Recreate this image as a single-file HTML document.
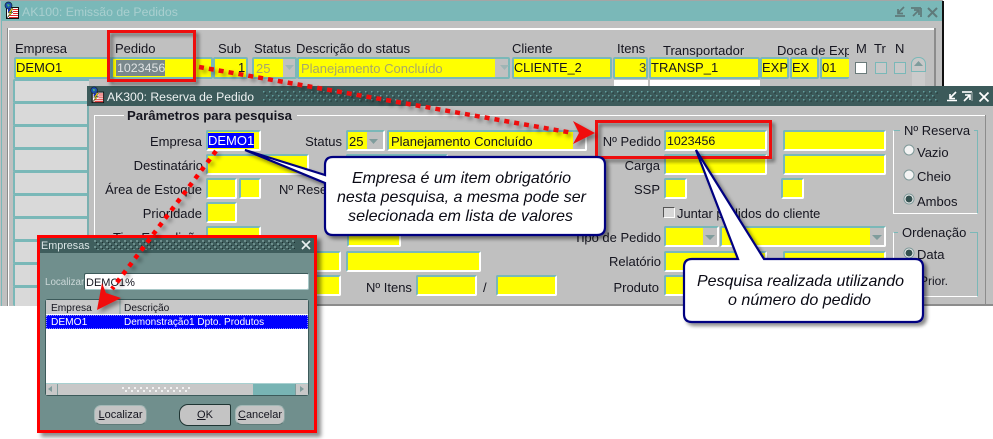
<!DOCTYPE html>
<html><head><meta charset="utf-8">
<style>
html,body{margin:0;padding:0;background:#fff}
#p{position:relative;width:993px;height:439px;overflow:hidden;background:#fff;font-family:"Liberation Sans",sans-serif;font-size:13px;color:#15151f}
#p div{position:absolute;box-sizing:border-box}
.t{white-space:nowrap;line-height:14px;height:14px;margin-top:1px}
.f{background:#ff0;border:2px solid;border-color:#7ab8b8 #fff #fff #7ab8b8;border-radius:2px}
.g{background:#ff0;border:2px solid #7ab8b8;border-radius:2px}
.r{background:#d9d9d9;border:2px solid #7ab8b8;border-right:0;border-radius:2px 0 0 2px}
.d{background:#c0c0c0}
.b{background:#c4c4c4;border-radius:7px;border:1px solid #8ba5a3;border-color:#a3b8b6 #8ba5a3 #5f7a78 #a3b8b6;text-align:center;font-size:11px;line-height:18px}
.s{font-size:10.2px}
svg{position:absolute;left:0;top:0}
</style></head><body>
<div id="p">
<!-- window 1 -->
<div style="left:0;top:0;width:943px;height:86px;background:#c0c0c0;border-top:1px solid #a5a5a5"></div>
<div style="left:0;top:86px;width:88px;height:220px;background:#c0c0c0"></div>
<div style="left:942px;top:1px;width:2px;height:86px;background:#111"></div>
<div style="left:1px;top:1px;width:941px;height:20px;background:#7ab8b8"></div>
<div style="left:1px;top:21px;width:1px;height:285px;background:#7ab8b8"></div>
<div style="left:7px;top:28px;width:929px;height:2px;background:#fff"></div>
<div style="left:7px;top:28px;width:2px;height:278px;background:#fff;border-left:1px solid #8c8c8c"></div>
<div style="left:934px;top:28px;width:2px;height:60px;background:#8c8c8c"></div>
<div class="t" style="left:22px;top:4px;color:#a9cfcf;font-size:12.3px">AK100: Emissão de Pedidos</div>

<div class="t" style="left:15px;top:41px">Empresa</div>
<div class="t" style="left:115px;top:41px">Pedido</div>
<div class="t" style="left:218px;top:41px">Sub</div>
<div class="t" style="left:254px;top:41px">Status</div>
<div class="t" style="left:296px;top:41px">Descrição do status</div>
<div class="t" style="left:512px;top:41px">Cliente</div>
<div class="t" style="left:617px;top:41px">Itens</div>
<div class="t" style="left:663px;top:43px">Transportador</div>
<div class="t" style="left:777px;top:43px;width:72px;overflow:hidden">Doca de Exped</div>
<div class="t" style="left:856px;top:41px">M</div>
<div class="t" style="left:874px;top:41px">Tr</div>
<div class="t" style="left:895px;top:41px">N</div>

<div class="g" style="left:14px;top:57px;width:98px;height:22px"></div>
<div class="g" style="left:111px;top:57px;width:102px;height:22px"></div>
<div class="g" style="left:213px;top:57px;width:35px;height:22px"></div>
<div class="g" style="left:252px;top:57px;width:45px;height:22px"></div>
<div class="d" style="left:283px;top:59px;width:12px;height:18px"></div>
<div class="g" style="left:297px;top:57px;width:213px;height:22px"></div>
<div class="d" style="left:495px;top:59px;width:13px;height:18px"></div>
<div class="g" style="left:512px;top:57px;width:100px;height:22px"></div>
<div class="g" style="left:613px;top:57px;width:35px;height:22px"></div>
<div class="g" style="left:649px;top:57px;width:111px;height:22px"></div>
<div class="g" style="left:760px;top:57px;width:29px;height:22px"></div>
<div class="g" style="left:790px;top:57px;width:29px;height:22px"></div>
<div class="g" style="left:820px;top:57px;width:29px;height:22px;border-right:0"></div>
<div style="left:116px;top:60px;width:49px;height:16px;background:#79888c"></div>
<div class="t" style="left:16px;top:60px">DEMO1</div>
<div class="t" style="left:117px;top:60px;color:#dfe3e3;font-size:12.4px">1023456</div>
<div class="t" style="left:238px;top:60px">1</div>
<div class="t" style="left:256px;top:61px;color:#a8a868">25</div>
<div class="t" style="left:301px;top:61px;color:#a8a868">Planejamento Concluído</div>
<div class="t" style="left:514px;top:60px;font-size:12.7px">CLIENTE_2</div>
<div class="t" style="left:639px;top:60px;color:#444">3</div>
<div class="t" style="left:651px;top:60px">TRANSP_1</div>
<div class="t" style="left:762px;top:60px">EXP</div>
<div class="t" style="left:792px;top:60px">EX</div>
<div class="t" style="left:822px;top:60px">01</div>

<div style="left:855px;top:62px;width:12px;height:12px;background:#fff;border:1px solid #6a7a7a"></div>
<div style="left:875px;top:62px;width:12px;height:12px;background:#c8c8c8;border:1px solid #7ab8b8"></div>
<div style="left:894px;top:62px;width:12px;height:12px;background:#c8c8c8;border:1px solid #7ab8b8"></div>
<div style="left:912px;top:70px;width:13px;height:17px;background:#cbcbcb"></div>
<div style="left:911px;top:57px;width:15px;height:15px;background:#c8c8c8;border:1px solid #7ab8b8;border-radius:7px 7px 0 0"></div>
<div style="left:614px;top:80px;width:34px;height:7px;background:#fff"></div>
<div style="left:650px;top:80px;width:110px;height:7px;background:#fff"></div>

<div class="r" style="left:13px;top:79px;width:76px;height:24px"></div>
<div class="r" style="left:13px;top:102px;width:76px;height:24px"></div>
<div class="r" style="left:13px;top:125px;width:76px;height:24px"></div>
<div class="r" style="left:13px;top:148px;width:76px;height:24px"></div>
<div class="r" style="left:13px;top:171px;width:76px;height:24px"></div>
<div class="r" style="left:13px;top:194px;width:76px;height:24px"></div>
<div class="r" style="left:13px;top:217px;width:76px;height:24px"></div>
<div class="r" style="left:13px;top:240px;width:76px;height:24px"></div>
<div class="r" style="left:13px;top:263px;width:76px;height:24px"></div>
<div class="r" style="left:13px;top:286px;width:76px;height:20px;border-bottom:0"></div>

<svg width="993" height="110">
<defs>
<pattern id="dots" width="6" height="8" patternUnits="userSpaceOnUse">
<rect x="0" y="0" width="1.500" height="1.500" fill="#63a0a0"/><rect x="1.500" y="1.500" width="1" height="1" fill="#0c1a1a"/>
<rect x="3" y="4" width="1.500" height="1.500" fill="#63a0a0"/><rect x="4.500" y="5.500" width="1" height="1" fill="#0c1a1a"/>
</pattern>
<pattern id="dots2" width="6" height="6" patternUnits="userSpaceOnUse">
<rect x="0" y="0" width="2" height="2" fill="#6d8f8d"/><rect x="3" y="3" width="2" height="2" fill="#6d8f8d"/>
<rect x="2" y="2" width="1" height="1" fill="#1d3030"/><rect x="5" y="5" width="1" height="1" fill="#1d3030"/>
</pattern>
</defs>
<path d="M285 65h9l-4.500 5zM500 65h9l-4.500 5z" fill="#9fb5b5"/>
<path d="M914 66h9l-4.500-5z" fill="#7f9c9c"/>
<g stroke="#5f7a7a" fill="none" stroke-width="1.700">
<path d="M895 16h10M904 7l-6 6M898 9v4.500h5"/>
<path d="M911 8h10M921 8v9" /><path d="M913 16l6-6M914 10h5v5"/>
<path d="M928 8l9 9M937 8l-9 9" stroke-width="2"/>
</g>
<g>
<rect x="6.500" y="7.500" width="12" height="11" fill="#fff" stroke="#111"/>
<path d="M6 8h1v11H6z" fill="#111"/>
<path d="M8 9h4v3H8z" fill="#2030d8"/>
<path d="M13 9h5v1h-5zM13 11h5v1h-5zM13 13h5v1h-5zM9 15h9v1H9zM9 17h9v1H9z" fill="#e02828"/>
<path d="M12 8l-4 5 2.500-.5L7 18l6-6-2.500.5L13 9z" fill="#ffe800" stroke="#222" stroke-width=".5"/>
<circle cx="8.500" cy="5.500" r="3.500" fill="#1c4fb0" stroke="#123" stroke-width=".7"/>
<path d="M7 4l3 1-2 2z" fill="#4cc070"/>
</g>
</svg>

<!-- window 2 -->
<div style="left:87px;top:86px;width:906px;height:220px;background:#c0c0c0;border-left:2px solid #7ab0b0;border-bottom:2px solid #8c8c8c"></div>
<div style="left:87px;top:86px;width:906px;height:20px;background:#3c5a5a"></div>
<svg style="left:263px;top:91px" width="675" height="11"><rect width="675" height="11" fill="url(#dots)"/></svg>
<div class="t" style="left:107px;top:89px;color:#eef2f2;font-size:12.2px">AK300: Reserva de Pedido</div>
<div style="left:94px;top:115px;width:30px;height:1px;background:#fff"></div>
<div style="left:297px;top:115px;width:688px;height:1px;background:#fff"></div>
<div style="left:94px;top:115px;width:1px;height:191px;background:#fff"></div>
<div style="left:985px;top:115px;width:1px;height:190px;background:#8c8c8c"></div>
<div class="t" style="left:127px;top:108px;font-weight:bold;font-size:13.2px">Parâmetros para pesquisa</div>

<div class="f" style="left:206px;top:130px;width:55px;height:21px"></div>
<div style="left:208px;top:133px;width:46px;height:15px;background:#00f"></div>
<div class="t" style="left:208px;top:133px;color:#fff">DEMO1</div>
<div class="t" style="right:791px;top:134px">Empresa</div>
<div class="t" style="right:651px;top:134px">Status</div>
<div class="f" style="left:346px;top:130px;width:39px;height:21px"></div>
<div class="d" style="left:367px;top:132px;width:16px;height:17px"></div>
<div class="t" style="left:349px;top:134px">25</div>
<div class="f" style="left:387px;top:130px;width:200px;height:21px"></div>
<div class="d" style="left:573px;top:132px;width:12px;height:17px"></div>
<div class="t" style="left:391px;top:134px">Planejamento Concluído</div>

<div class="t" style="right:790px;top:158px">Destinatário</div>
<div class="f" style="left:206px;top:154px;width:103px;height:21px"></div>
<div class="f" style="left:346px;top:154px;width:102px;height:21px"></div>
<div class="t" style="right:791px;top:182px">Área de Estoque</div>
<div class="f" style="left:206px;top:178px;width:31px;height:21px"></div>
<div class="f" style="left:239px;top:178px;width:22px;height:21px"></div>
<div class="t" style="left:279px;top:182px">Nº Reserva</div>
<div class="t" style="right:791px;top:206px">Prioridade</div>
<div class="f" style="left:206px;top:202px;width:31px;height:21px"></div>
<div class="t" style="left:113px;top:230px">Tipo Expedição</div>
<div class="f" style="left:206px;top:226px;width:55px;height:21px"></div>
<div class="f" style="left:347px;top:226px;width:54px;height:21px"></div>
<div class="f" style="left:300px;top:251px;width:41px;height:21px"></div>
<div class="f" style="left:346px;top:251px;width:135px;height:21px"></div>
<div class="f" style="left:300px;top:275px;width:41px;height:21px"></div>
<div class="t" style="left:366px;top:280px">Nº Itens</div>
<div class="f" style="left:416px;top:275px;width:61px;height:21px"></div>
<div class="t" style="left:483px;top:280px">/</div>
<div class="f" style="left:496px;top:275px;width:61px;height:21px"></div>

<div class="t" style="right:332px;top:134px">Nº Pedido</div>
<div class="f" style="left:664px;top:130px;width:103px;height:21px"></div>
<div class="t" style="left:667px;top:133px;font-size:12.4px">1023456</div>
<div class="f" style="left:783px;top:130px;width:103px;height:21px"></div>
<div class="t" style="right:333px;top:158px">Carga</div>
<div class="f" style="left:664px;top:154px;width:103px;height:21px"></div>
<div class="f" style="left:783px;top:154px;width:103px;height:21px"></div>
<div class="t" style="right:333px;top:182px">SSP</div>
<div class="f" style="left:664px;top:178px;width:23px;height:21px"></div>
<div class="f" style="left:781px;top:178px;width:23px;height:21px"></div>
<div style="left:663px;top:207px;width:12px;height:11px;background:#d8d8d8;border:1px solid;border-color:#555 #fff #fff #555"></div>
<div class="t" style="left:677px;top:206px;font-size:12.9px">Juntar pedidos do cliente</div>
<div class="t" style="right:332px;top:230px">Tipo de Pedido</div>
<div class="f" style="left:664px;top:226px;width:55px;height:21px"></div>
<div class="d" style="left:703px;top:228px;width:14px;height:17px"></div>
<div class="f" style="left:720px;top:226px;width:166px;height:21px"></div>
<div class="d" style="left:870px;top:228px;width:14px;height:17px"></div>
<div class="t" style="right:332px;top:254px">Relatório</div>
<div class="f" style="left:664px;top:251px;width:103px;height:21px"></div>
<div class="f" style="left:783px;top:251px;width:103px;height:21px"></div>
<div class="t" style="right:334px;top:280px">Produto</div>
<div class="f" style="left:664px;top:275px;width:40px;height:21px"></div>

<div style="left:893px;top:130px;width:85px;height:84px;border:1px solid;border-color:#7ab8b8 #7ab8b8 #fff #fff"></div>
<div class="d t" style="left:900px;top:123px;padding:0 4px">Nº Reserva</div>
<div class="t" style="left:917px;top:145px">Vazio</div>
<div class="t" style="left:917px;top:169px">Cheio</div>
<div class="t" style="left:917px;top:194px">Ambos</div>
<div style="left:893px;top:232px;width:85px;height:65px;border:1px solid;border-color:#7ab8b8 #7ab8b8 #fff #fff"></div>
<div class="d t" style="left:898px;top:225px;padding:0 4px">Ordenação</div>
<div class="t" style="left:917px;top:247px">Data</div>
<div class="t" style="left:920px;top:273px;font-size:12px">Prior.</div>

<svg width="993" height="306">
<path d="M369 139h9l-4.500 5zM705 235h10l-5 5zM872 235h10l-5 5z" fill="#7f9c9c"/>
<g stroke="#fff" fill="none" stroke-width="1.600">
<path d="M947 100.500h10M956 92l-6 6M950 94v4.500h5"/>
<path d="M962 92h10"/><path d="M964 101l6-6M965 95h5v5"/>
<path d="M979.500 92.500l9 9M988.500 92.500l-9 9" stroke-width="1.800"/>
</g>
<path d="M972 92v9" stroke="#9aa8a8" stroke-width="1.200"/>
<g stroke="#7f9999" fill="#f4f4f4"><circle cx="909" cy="150" r="5"/><circle cx="909" cy="175" r="5"/><circle cx="909" cy="199" r="5"/><circle cx="909" cy="253" r="5"/></g>
<circle cx="909" cy="199" r="3.500" fill="#33504f"/><circle cx="909" cy="253" r="3.500" fill="#33504f"/>
<g transform="translate(86,85) scale(.95)">
<rect x="6.500" y="7.500" width="12" height="11" fill="#fff" stroke="#111"/>
<path d="M6 8h1v11H6z" fill="#111"/>
<path d="M8 9h4v3H8z" fill="#2030d8"/>
<path d="M13 9h5v1h-5zM13 11h5v1h-5zM13 13h5v1h-5zM9 15h9v1H9zM9 17h9v1H9z" fill="#e02828"/>
<path d="M12 8l-4 5 2.500-.5L7 18l6-6-2.500.5L13 9z" fill="#ffe800" stroke="#222" stroke-width=".5"/>
<circle cx="8.500" cy="5.500" r="3.500" fill="#1c4fb0" stroke="#123" stroke-width=".7"/>
<path d="M7 4l3 1-2 2z" fill="#4cc070"/>
</g>
</svg>

<!-- dialog -->
<div style="left:37px;top:235px;width:280px;height:198px;background:#708f8d;border:3px solid #f00;box-shadow:4px 4px 4px rgba(0,0,0,.45)"></div>
<div style="left:40px;top:238px;width:274px;height:15px;background:#3f5e5d"></div>
<svg style="left:94px;top:240px" width="201" height="10"><rect width="201" height="10" fill="url(#dots2)"/></svg>
<div class="t" style="left:41px;top:238px;color:#dbe6e6;font-size:10.8px">Empresas</div>
<div class="t s" style="left:45px;top:275px;color:#cbd8d8;font-size:9.8px">Localizar</div>
<div style="left:84px;top:273px;width:225px;height:17px;background:#fff;border:1px solid;border-color:#3c5a5a #a8c8c8 #a8c8c8 #3c5a5a;border-radius:2px"></div>
<div class="t s" style="left:86px;top:275px;font-size:11px">DEMO1%</div>
<div style="left:45px;top:299px;width:264px;height:97px;background:#fff;border:1px solid #3c5a5a;border-radius:3px"></div>
<div style="left:46px;top:300px;width:262px;height:14px;background:#c8c8c8"></div>
<div style="left:119px;top:300px;width:2px;height:14px;background:#a5b5b5"></div>
<div class="t s" style="left:51px;top:301px">Empresa</div>
<div class="t s" style="left:124px;top:301px">Descrição</div>
<div style="left:46px;top:315px;width:262px;height:14px;background:#00f;border:1px dotted #8c8cff"></div>
<div class="t s" style="left:51px;top:315px;color:#fff">DEMO1</div>
<div class="t" style="left:124px;top:315px;color:#fff;font-size:10px">Demonstração1 Dpto. Produtos</div>
<div style="left:46px;top:383px;width:262px;height:12px;background:#c8c8c8;border-top:1px solid #a8d0d0"></div>
<div style="left:253px;top:384px;width:42px;height:11px;background:#78b4b4"></div>
<div style="left:57px;top:384px;width:1px;height:11px;background:#7f9c9c"></div>
<div style="left:295px;top:384px;width:1px;height:11px;background:#7f9c9c"></div>
<div style="left:122px;top:387px;width:68px;height:6px;background:radial-gradient(circle at 1px 1px,#fff .8px,transparent 1px) 0 0/6px 6px,radial-gradient(circle at 1px 1px,#fff .8px,transparent 1px) 3px 3px/6px 6px"></div>
<div class="b" style="left:94px;top:405px;width:53px;height:20px"><u>L</u>ocalizar</div>
<div class="b" style="left:179px;top:404px;width:52px;height:22px;border:1px solid #1f3533;border-radius:9px 2px 2px 9px;line-height:20px"><u>O</u>K</div>
<div class="b" style="left:235px;top:405px;width:50px;height:20px"><u>C</u>ancelar</div>

<!-- overlay annotations -->
<svg width="993" height="439" style="font-family:'Liberation Sans',sans-serif">
<defs>
<filter id="sh" x="-20%" y="-20%" width="140%" height="140%"><feDropShadow dx="3" dy="3" stdDeviation="1.800" flood-color="#000" flood-opacity=".45"/></filter>
<filter id="sl" x="-20%" y="-20%" width="140%" height="140%"><feDropShadow dx="3" dy="3" stdDeviation="2" flood-color="#000" flood-opacity=".4"/></filter>
</defs>
<path d="M302 241l8 8M310 241l-8 8" stroke="#e8f0f0" stroke-width="1.700" fill="none"/>
<path d="M48 389l4-3v6zM304 389l-4-3v6z" fill="#7f9c9c"/>
<rect x="108.500" y="31.500" width="86" height="49" fill="none" stroke="#ee1111" stroke-width="3" filter="url(#sh)"/>
<rect x="596.500" y="121.500" width="174" height="36" fill="none" stroke="#ee1111" stroke-width="3" filter="url(#sh)"/>
<g filter="url(#sl)">
<path d="M199 67L573 133" fill="none" stroke="#ee1111" stroke-width="4.500" stroke-dasharray="5 5"/>
<path d="M573 121L595 133L573 144L579 133Z" fill="#f01010"/>
</g>
<g filter="url(#sl)">
<path d="M216 151L112 289" fill="none" stroke="#f00" stroke-width="4.500" stroke-dasharray="4.500 5.500"/>
<path d="M102 283L106 293L121 298L97 310Z" fill="#f01010"/>
</g>
<path d="M333 157H597Q605 157 605 165V227Q605 235 597 235H333Q325 235 325 227V183L245 150L325 175V165Q325 157 333 157Z" fill="#fff" stroke="#000080" stroke-width="2.200" filter="url(#sh)"/>
<path d="M692 259H738L696 150L764 259H915Q923 259 923 267V314Q923 322 915 322H692Q684 322 684 314V267Q684 259 692 259Z" fill="#fff" stroke="#000080" stroke-width="2.200" filter="url(#sh)"/>
<g font-size="16" font-style="italic" fill="#0a0a14">
<text x="352" y="183" textLength="219" lengthAdjust="spacingAndGlyphs">Empresa é um item obrigatório</text>
<text x="337" y="202" textLength="249" lengthAdjust="spacingAndGlyphs">nesta pesquisa, a mesma pode ser</text>
<text x="348" y="221" textLength="225" lengthAdjust="spacingAndGlyphs">selecionada em lista de valores</text>
<text x="697" y="286" textLength="207" lengthAdjust="spacingAndGlyphs">Pesquisa realizada utilizando</text>
<text x="728" y="305" textLength="143" lengthAdjust="spacingAndGlyphs">o número do pedido</text>
</g>
</svg>
</div>
</body></html>
